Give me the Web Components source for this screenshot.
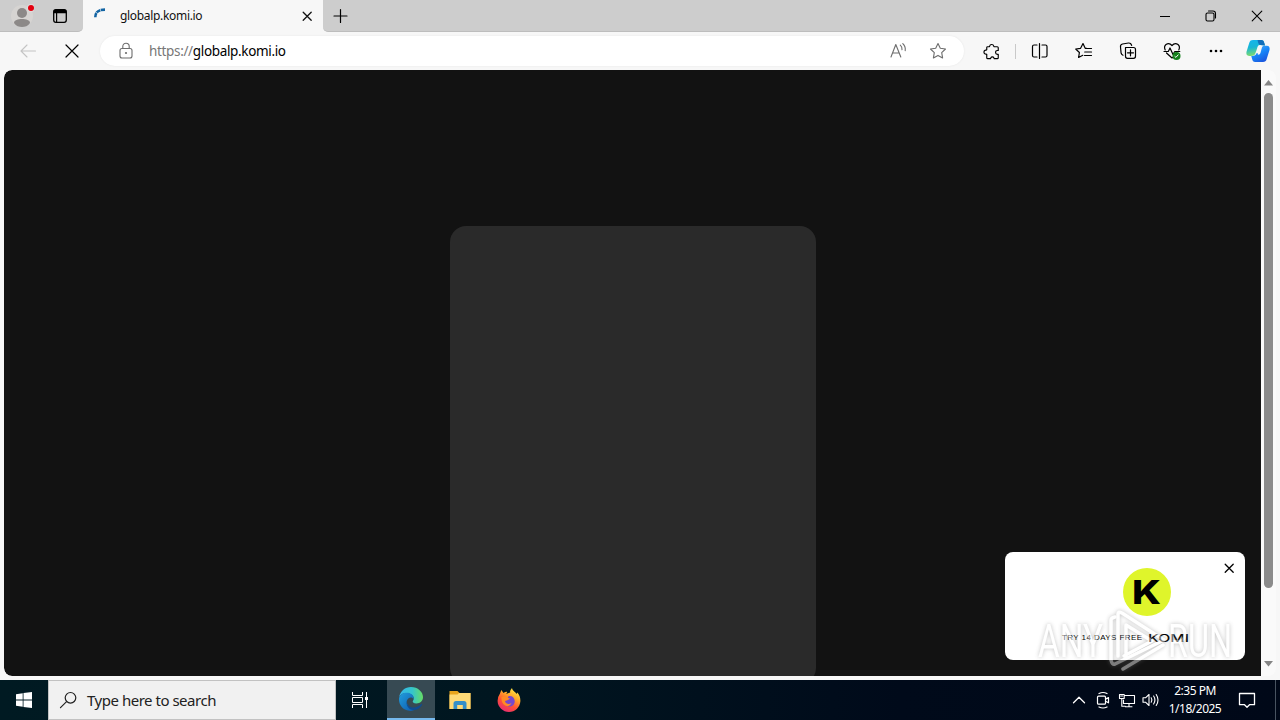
<!DOCTYPE html>
<html lang="en">
<head>
<meta charset="utf-8">
<title>globalp.komi.io</title>
<style>
    body {
        margin: 0;
        overflow: hidden;
        font-family: "Noto Sans", "Open Sans", sans-serif;
    }
</style>
</head>
<body>
<uc-desktop>
    <uc-browser>
        <uc-tab-bar slot="tabs"><uc-tab>globalp.komi.io</uc-tab></uc-tab-bar>
        <uc-toolbar slot="toolbar"><uc-address scheme="https://">globalp.komi.io</uc-address></uc-toolbar>
        <uc-page>
            <uc-card></uc-card>
            <uc-promo slot="overlay">TRY 14 DAYS FREE</uc-promo>
        </uc-page>
    </uc-browser>
    <uc-taskbar slot="taskbar">
        <span slot="search">Type here to search</span>
        <span slot="time">2:35 PM</span>
        <span slot="date">1/18/2025</span>
    </uc-taskbar>
    <uc-watermark slot="mark"></uc-watermark>
</uc-desktop>

<script>
"use strict";

const line = (d, width = 1.1) =>
    `<path d="${d}" fill="none" stroke="currentColor" stroke-width="${width}" stroke-linecap="round" stroke-linejoin="round"/>`;

// every icon is drawn in a 24x24 box
const icons = {
    avatar: `<circle cx="12" cy="12" r="11" fill="#d6d4d2"/><circle cx="12" cy="9" r="5" fill="#8c8988"/>
        <path d="M4 19c0-3 4-4 8-4s8 1 8 4c-2 3-5 4-8 4s-6-1-8-4z" fill="#8c8988"/>
        <circle cx="21" cy="4" r="4" fill="#dedcdb"/><circle cx="21" cy="4" r="3" fill="#e3000f"/>`,
    workspace: `<rect x="5.7" y="5.7" width="12.6" height="12.6" rx="2.2" fill="none" stroke="#000" stroke-width="1.3"/>
        <path d="M5.5 9.3V8q0-2.5 2.5-2.5h8q2.5 0 2.5 2.5v1.3z"/><path d="M8.6 9v9" stroke="#000" stroke-width="1.2"/>`,
    spinner: `<path d="M7.3 13.2Q7.3 5.6 17 5.6" fill="none" stroke="#1264a3" stroke-width="2.6" stroke-dasharray="4.4 .5"/>`,
    smallx: line("M8.2 8.2l8 8M16.2 8.2l-8 8", 1.3),
    plus: line("M12.5 5.5v13M6 12h13", 1.2),
    minimize: `<path d="M7 12.5h10" stroke="#000"/>`,
    restore: line("M8.5 9h5q1.5 0 1.5 1.5v5q0 1.5-1.5 1.5h-5Q7 17 7 15.500v-5Q7 9 8.500 9M9.500 7h4.500q2.500 0 2.500 2.500V14", 1.1),
    close: line("M7.2 7.2l9.6 9.6M16.8 7.2l-9.6 9.6"),
    back: line("M19.5 12H5M11 6l-6 6 6 6"),
    stop: line("M6 6l12 12M18 6L6 18", 1.2),
    lock: line("M8 9.5h8q2 0 2 2v5.5q0 2-2 2H8q-2 0-2-2v-5.5q0-2 2-2zM8.8 9.3V7.5a3.2 3.2 0 0 1 6.4 0v1.8") + `<circle cx="12" cy="14" r="1.1" fill="currentColor"/>`,
    read: line("M5 18l4.8-12.5L14.8 18M6.6 14h6.6M14.3 6.2q2 1.8 1.7 4.6M16.8 4.7q3 2.8 2.4 7"),
    star: line("M12 4.5l2.3 4.8 5.2.7-3.8 3.7.9 5.2-4.6-2.5-4.6 2.5.9-5.2L4.5 10l5.2-.7z"),
    extension: line("M9 6.5a2.2 2.2 0 0 1 4.3-.2L13.5 7H17q1 0 1 1v3h-.8a2 2 0 0 0 0 4h.8v3.500q0 1-1 1h-3.200l-.3-.8a1.800 1.800 0 0 0-3.300 0l-.3.8H7q-1 0-1-1v-3.600l-.8-.1a2.100 2.100 0 0 1 0-4.200L6 10.200V7.800Q6 7 6.900 7h2z", 1.2),
    split: line("M9 6H6Q4.500 6 4.500 7.500v9Q4.500 18 6 18h3M11.500 4.500v15M14 6h3.500Q19 6 19 7.500v9q0 1.500-1.500 1.500H14", 1.2),
    favorites: line("M14.6 9.3h-1.400L11 4.600 8.600 9.300l-4.900.7 3.700 3.500-.8 5 4.200-2.200M14.500 9.500h5M15 13h4.500M12.700 13h2.300M12.500 16.500h7", 1.2),
    collections: line("M9.500 8.500h8q2 0 2 2v6.800q0 2-2 2h-6q-2 0-2-2zM14.500 10.800v6M11.500 13.800h6M7 16.200q-1.500-.6-1.900-2L4.500 8Q4.200 5.700 6.500 5l6-1q2.400-.2 3 2l.1.5", 1.2),
    heart: line("M5.2 11Q3.600 7.400 6 5.500 9.200 3.400 12 6.500 14.800 3.400 18 5.500q2.400 2 .8 5.500M6.500 14l5.500 5 1-.8M4 12.500h4.300L10 9l3 6.500 1.800-3h5", 1.2) +
        `<circle cx="16.5" cy="17" r="4" fill="#13801b"/><path d="M14.6 17.2l1.3 1.2 2.5-2.8" fill="none" stroke="#fff"/>`,
    dots: `<circle cx="7" cy="12" r="1.3"/><circle cx="12" cy="12" r="1.3"/><circle cx="17" cy="12" r="1.3"/>`,
    copilot: `<defs><linearGradient id="a" x2=".2" y2="1"><stop stop-color="#13b4ee"/><stop offset=".5" stop-color="#18b6d5"/><stop offset="1" stop-color="#7ddc6d"/></linearGradient>
        <linearGradient id="b" x2=".6" y2="1"><stop stop-color="#53b6fa"/><stop offset=".55" stop-color="#1786f8"/><stop offset="1" stop-color="#1b58df"/></linearGradient></defs>
        <path d="M7 1h8.5c2.5 0 2.7 3 3.5 5.5l-5-.4c-2 0-2.4 1.6-3 3.7L9.5 14c-.7 2.3-2 3-4.600 3H3.200C.7 17 0 15 .5 12.800l2.800-9C4 1.700 5 1 7 1z" fill="url(#a)"/>
        <path d="M11.500 1h4c2.500 0 2.700 3 3.500 5.500l-4.500-.4c-2-.1-2.500-3.100-3-5.100z" fill="#126fba"/>
        <path d="M18 6.700h2.800c2.500 0 3.200 2 2.700 4.300l-2.800 9c-.7 2.200-1.600 3-3.700 3H9c-2.500 0-2.800-2.800-3.700-6 3 .2 4.700-.7 5.400-3h1c-.7 2.500 2.200 2.200 2.900-.5l1-3.800c.5-1.800 1-3 2.400-3z" fill="url(#b)"/>`,
    windows: `<path d="M4 6.2l6.700-1v6.400H4zM11.500 5.100L20 4v7.600h-8.500zM4 12.400h6.700v6.400L4 17.800zM11.500 12.400H20V20l-8.500-1.100z" fill="#fff"/>`,
    search: line("M10.300 13.800L4.500 19.700", 1.2) + `<circle cx="14.500" cy="9.800" r="5.300" fill="none" stroke="currentColor" stroke-width="1.200"/>`,
    taskview: `<path d="M4.500 4v3.500h10V4M4.500 20v-3.500h10V20M4.500 9.500h10v5h-10zM18.500 4v16" fill="none" stroke="#fff"/><path d="M17 9h3v3h-3z" fill="#fff"/>`,
    edge: `<defs><linearGradient id="a" x2="1"><stop stop-color="#35b6ec"/><stop offset=".55" stop-color="#35c5cb"/><stop offset="1" stop-color="#66dc64"/></linearGradient>
        <linearGradient id="b" y2="1"><stop stop-color="#219ddd"/><stop offset="1" stop-color="#0d58ad"/></linearGradient></defs>
        <path d="M.2 10C1.400 4 6 0 12 0c7 0 12 5 12 10 0 4-3 6.400-6.600 6.400-3 0-4.300-1.300-3.500-2.400C17 10 12 6 7.500 6 4 6 1.500 7.500.2 10z" fill="url(#a)"/>
        <path d="M.1 11C1 7.700 4 5.800 7.800 5.800c4.700 0 7.500 3 6.600 6.400-1-3-6-2.200-6.600 2-.4 4 3.700 8.200 8.500 8.400-2 1.200-4 1.500-6 1.200C3.500 23-.7 17.300.1 11z" fill="url(#b)"/>
        <path d="M8 12.500c-1.600 5.500 4 9 8.400 7.800 2.300-.6 4-1.800 5.600-3 1-.6 1.300.1.800.9-1.700 2.700-4.400 4.400-6.800 4.800C10 24 6 18 8 12.500z" fill="#104b91"/>`,
    folder: `<path d="M1.500 3h8l2 2h11v16h-21z" fill="#e9a51c"/><path d="M1.500 6.500h8L11 5h11.500v16h-21z" fill="#ffda76"/>
        <path d="M5.500 21v-5.500q0-2.500 2.500-2.500h8q2.500 0 2.500 2.500V21h-3.700v-4H9.200v4z" fill="#348fc8"/>`,
    firefox: `<defs><linearGradient id="a" x1=".8" x2=".25" y2="1"><stop stop-color="#fff04a"/><stop offset=".35" stop-color="#ffa727"/><stop offset=".65" stop-color="#ff5035"/><stop offset="1" stop-color="#e62a77"/></linearGradient></defs>
        <path d="M3 5.500L4.300 2l2.200 3q2-1.400 3.800-1.100L9.200 6l4-1.500Q12.500 2.500 15 0c.4 3 3 3.300 4.500 6l.8-1.400Q23.500 8 23.400 13C23 19.500 18 24 12 24S.6 19 .6 13q-.1-4 2.400-7.500z" fill="url(#a)"/>
        <path d="M6.500 10.500l4.100-.2 1-2.200q5.300-.7 6.100 4.700c.3 4-2.900 6-5.900 5.700-4-.2-6.400-3.500-5.300-8z" fill="#7548cc"/>
        <path d="M4.500 9q3-1.500 5.500.2l3 1.500-2.600 1.600q-2.700.4-2.300 1.600 2.400 3.500 6.500 1.200-1.800 4.100-6 2.700Q4 15 4.500 9z" fill="#ff8a24"/>`,
    chevron: line("M6.500 14.800L12 9.300l5.500 5.500", 1.3),
    meet: line("M7.500 8.200h6q1 0 1 1v6q0 1-1 1h-6q-1 0-1-1v-6q0-1 1-1zM15 10.900l2.500-1.300v5.200L15 13.500M8 5.500q4-2 8 0M8 19q4 2 8 0", 1.2),
    network: line("M10 7.500h9.500v8H8.500V12M14 15.500v3M10.500 18.700h6.500M4.500 6.500h4.700v4H4.500zM6.800 10.500v7.700h3.500M5.700 8h2", 1.1),
    volume: line("M4 9.800h2.500L10 6.500v11l-3.500-3.300H4zM12.200 9.800q1.400 2.200 0 4.400M14.600 8q2.700 4 0 8M17.200 6.500q3.600 5.500 0 11", 1.1),
    action: line("M4.500 5.500h15v11.200h-5L12 19.200l-2.500-2.500h-5z", 1.3)
};

class Icon extends HTMLElement {
    constructor() {
        super();
        this.attachShadow({ mode: "open" });
    }
    connectedCallback() {
        const size = this.getAttribute("size") || 24;
        this.shadowRoot.innerHTML = `
            <style>
                :host { display: flex; align-items: center; justify-content: center; flex: none; }
                svg { display: block; flex: none; }
            </style>
            <svg width="${size}" height="${size}" viewBox="0 0 24 24">${icons[this.getAttribute("name")]}</svg>
        `;
    }
}
customElements.define("uc-icon", Icon);

// registers an element with static markup
function define(name, html) {
    customElements.define(name, class extends HTMLElement {
        constructor() {
            super();
            this.attachShadow({ mode: "open" }).innerHTML = html;
        }
    });
}

define("uc-desktop", `
    <style>
        :host { display: flex; flex-direction: column; position: relative; width: 1280px; height: 720px; overflow: hidden; }
    </style>
    <slot></slot>
    <slot name="taskbar"></slot>
    <slot name="mark"></slot>
`);

define("uc-browser", `
    <style>
        :host { display: flex; flex-direction: column; height: 680px; background: #f7f7f7; }
    </style>
    <slot name="tabs"></slot>
    <slot name="toolbar"></slot>
    <slot></slot>
`);

define("uc-tab-bar", `
    <style>
        :host { display: flex; height: 32px; background: #f7f7f7; }
        .left, .right { background: #cdcdcd; border-bottom: 1px solid #bdbdbd; box-sizing: border-box; display: flex; align-items: center; }
        .left { width: 83px; border-bottom-right-radius: 5px; padding-left: 10px; gap: 14px; }
        .right { flex: 1; border-bottom-left-radius: 5px; padding-left: 5px; }
        .controls { display: flex; margin-left: auto; }
        .controls uc-icon { width: 46px; }
    </style>
    <div class="left"><uc-icon name="avatar"></uc-icon><uc-icon name="workspace"></uc-icon></div>
    <slot></slot>
    <div class="right">
        <uc-icon name="plus"></uc-icon>
        <div class="controls">
            <uc-icon name="minimize"></uc-icon>
            <uc-icon name="restore"></uc-icon>
            <uc-icon name="close"></uc-icon>
        </div>
    </div>
`);

define("uc-tab", `
    <style>
        :host { display: flex; align-items: center; box-sizing: border-box; width: 240px; height: 32px; padding: 0 4px 0 5px; background: #f7f7f7; font-size: 12px; color: #111; }
        .title { margin: 0 0 1px 8px; flex: 1; white-space: nowrap; letter-spacing: -0.32px; }
    </style>
    <uc-icon name="spinner"></uc-icon>
    <span class="title"><slot></slot></span>
    <uc-icon name="smallx"></uc-icon>
`);

define("uc-toolbar", `
    <style>
        :host { display: flex; align-items: center; height: 38px; box-sizing: border-box; padding-left: 6px; }
        uc-icon { width: 44px; }
        .back { color: #c4c4c4; }
        .divider { width: 1px; height: 15px; background: #c9c9c9; margin: 0 2px 0 1px; }
        .copilot { width: 40px; }
        ::slotted(uc-address) { margin: 0 6px; }
    </style>
    <uc-icon class="back" name="back"></uc-icon>
    <uc-icon name="stop"></uc-icon>
    <slot></slot>
    <uc-icon name="extension" size="23"></uc-icon>
    <div class="divider"></div>
    <uc-icon name="split"></uc-icon>
    <uc-icon name="favorites"></uc-icon>
    <uc-icon name="collections"></uc-icon>
    <uc-icon name="heart"></uc-icon>
    <uc-icon name="dots"></uc-icon>
    <uc-icon class="copilot" name="copilot"></uc-icon>
`);

class Address extends HTMLElement {
    constructor() {
        super();
        this.attachShadow({ mode: "open" });
    }
    connectedCallback() {
        this.shadowRoot.innerHTML = `
            <style>
                :host { display: flex; align-items: center; box-sizing: border-box; width: 864px; height: 30px; padding: 0 14px; border-radius: 15px; background: #fff; box-shadow: 0 0 2px #e4e4e4; font-size: 13.5px; color: #000; }
                uc-icon { color: #6d6d6d; }
                .url { margin: 0 0 1px 11px; flex: 1; white-space: nowrap; letter-spacing: -0.34px; }
                .scheme { color: #777; }
                .read { margin-right: 16px; }
            </style>
            <uc-icon name="lock"></uc-icon>
            <span class="url"><span class="scheme">${this.getAttribute("scheme")}</span><slot></slot></span>
            <uc-icon class="read" name="read"></uc-icon>
            <uc-icon name="star"></uc-icon>
        `;
    }
}
customElements.define("uc-address", Address);

define("uc-page", `
    <style>
        :host { display: flex; position: relative; height: 606px; margin: 0 4px 4px; border-radius: 8px; overflow: hidden; background: #fafafa; }
        .view { flex: 1; display: flex; justify-content: center; align-items: flex-start; box-sizing: border-box; padding: 156px 0 0 1px; background: #121212; border-radius: 8px 0 0 8px; overflow: hidden; }
        .bar { width: 15px; display: flex; flex-direction: column; align-items: center; }
        .bar svg { display: block; flex: none; }
        .thumb { width: 9px; height: 495px; border-radius: 5px; background: #8b8b8b; }
        .space { flex: 1; }
    </style>
    <div class="view"><slot></slot></div>
    <div class="bar">
        <svg width="15" height="23"><path d="M3 15.500L7.500 10l4.500 5.500z" fill="#858585"/></svg>
        <div class="thumb"></div>
        <div class="space"></div>
        <svg width="15" height="18"><path d="M3 3l4.500 5.500L12 3z" fill="#858585"/></svg>
    </div>
    <slot name="overlay"></slot>
`);

define("uc-card", `
    <style>
        :host { display: block; flex: none; width: 366px; height: 458px; border-radius: 16px; background: #2a2a2a; }
    </style>
`);

define("uc-promo", `
    <style>
        :host { position: absolute; right: 31px; bottom: 16px; width: 240px; height: 108px; box-sizing: border-box; border-radius: 8px; background: #fff; color: #000; }
        uc-icon { position: absolute; top: 4px; right: 4px; }
        .logo { display: block; margin: 16px 0 0 118px; }
        .row { display: flex; align-items: center; margin: 15px 0 0 57px; height: 14px; }
        .label { width: 81px; margin-right: 5px; font: 500 8px/14px "Liberation Sans", sans-serif; letter-spacing: 0.42px; white-space: nowrap; }
    </style>
    <uc-icon name="smallx"></uc-icon>
    <svg class="logo" width="48" height="48">
        <circle cx="24" cy="24" r="24" fill="#dff52b"/>
        <text x="9" y="36" font-family="Inter, sans-serif" font-weight="800" font-size="33" textLength="29" lengthAdjust="spacingAndGlyphs">K</text>
    </svg>
    <div class="row">
        <span class="label"><slot></slot></span>
        <svg width="44" height="14">
            <text x="0" y="11" font-family="Inter, sans-serif" font-weight="500" font-size="10.500" textLength="41" lengthAdjust="spacingAndGlyphs">KOMI</text>
        </svg>
    </div>
`);

define("uc-watermark", `
    <style>
        :host { position: absolute; left: 1034px; top: 604px; width: 210px; height: 72px; pointer-events: none; }
        svg { display: block; overflow: visible; opacity: 0.45; filter: drop-shadow(0 0 2px #777); }
    </style>
    <svg width="210" height="72" fill="#fff" font-family="Roboto, sans-serif" font-weight="400" font-size="47">
        <text x="4" y="53" textLength="65" lengthAdjust="spacingAndGlyphs">ANY</text>
        <text x="134" y="53" textLength="64" lengthAdjust="spacingAndGlyphs">RUN</text>
        <g fill="none" stroke="#fff" stroke-width="3.500" stroke-linejoin="round" stroke-linecap="round">
            <path d="M77 55V16q0-2 4-3"/>
            <path d="M84 52V10q0-3 4-1l42 27-49 24q-3 1-4-4"/>
            <path d="M92 54V21l26 16-28 15"/>
            <path d="M89 65l40-24"/>
        </g>
    </svg>
`);

define("uc-taskbar", `
    <style>
        :host { display: flex; align-items: center; height: 40px; color: #fff; background: linear-gradient(90deg, #001a22 0, #001620 500px, #000a1a 900px, #000818 1280px); }
        uc-icon { width: 48px; height: 40px; }
        .search { display: flex; align-items: center; box-sizing: border-box; width: 288px; height: 40px; border: 1px solid #c2c2c2; background: #f1f1f1; color: #222; padding-left: 7px; font-size: 15px; white-space: nowrap; letter-spacing: -0.48px; }
        .search uc-icon { width: 24px; margin-right: 7px; }
        .active { margin-left: 3px; margin-right: 1px; box-sizing: border-box; background: #374a53; border-bottom: 2px solid #76b9ed; }
        .folder { margin-right: 1px; }
        .tray { display: flex; align-items: center; margin-left: auto; }
        .tray uc-icon { width: 24px; }
        .clock { width: 64px; text-align: center; font-size: 12px; line-height: 18px; letter-spacing: -0.5px; white-space: nowrap; }
        .tray .action { width: 40px; }
        .peek { height: 40px; width: 4px; margin-left: 8px; border-left: 1px solid #485360; }
    </style>
    <uc-icon name="windows"></uc-icon>
    <div class="search"><uc-icon name="search"></uc-icon><slot name="search"></slot></div>
    <uc-icon name="taskview"></uc-icon>
    <uc-icon class="active" name="edge"></uc-icon>
    <uc-icon class="folder" name="folder"></uc-icon>
    <uc-icon name="firefox"></uc-icon>
    <div class="tray">
        <uc-icon name="chevron"></uc-icon>
        <uc-icon name="meet"></uc-icon>
        <uc-icon name="network"></uc-icon>
        <uc-icon name="volume"></uc-icon>
        <div class="clock"><div><slot name="time"></slot></div><div><slot name="date"></slot></div></div>
        <uc-icon class="action" name="action"></uc-icon>
        <div class="peek"></div>
    </div>
`);
</script>
</body>
</html>
